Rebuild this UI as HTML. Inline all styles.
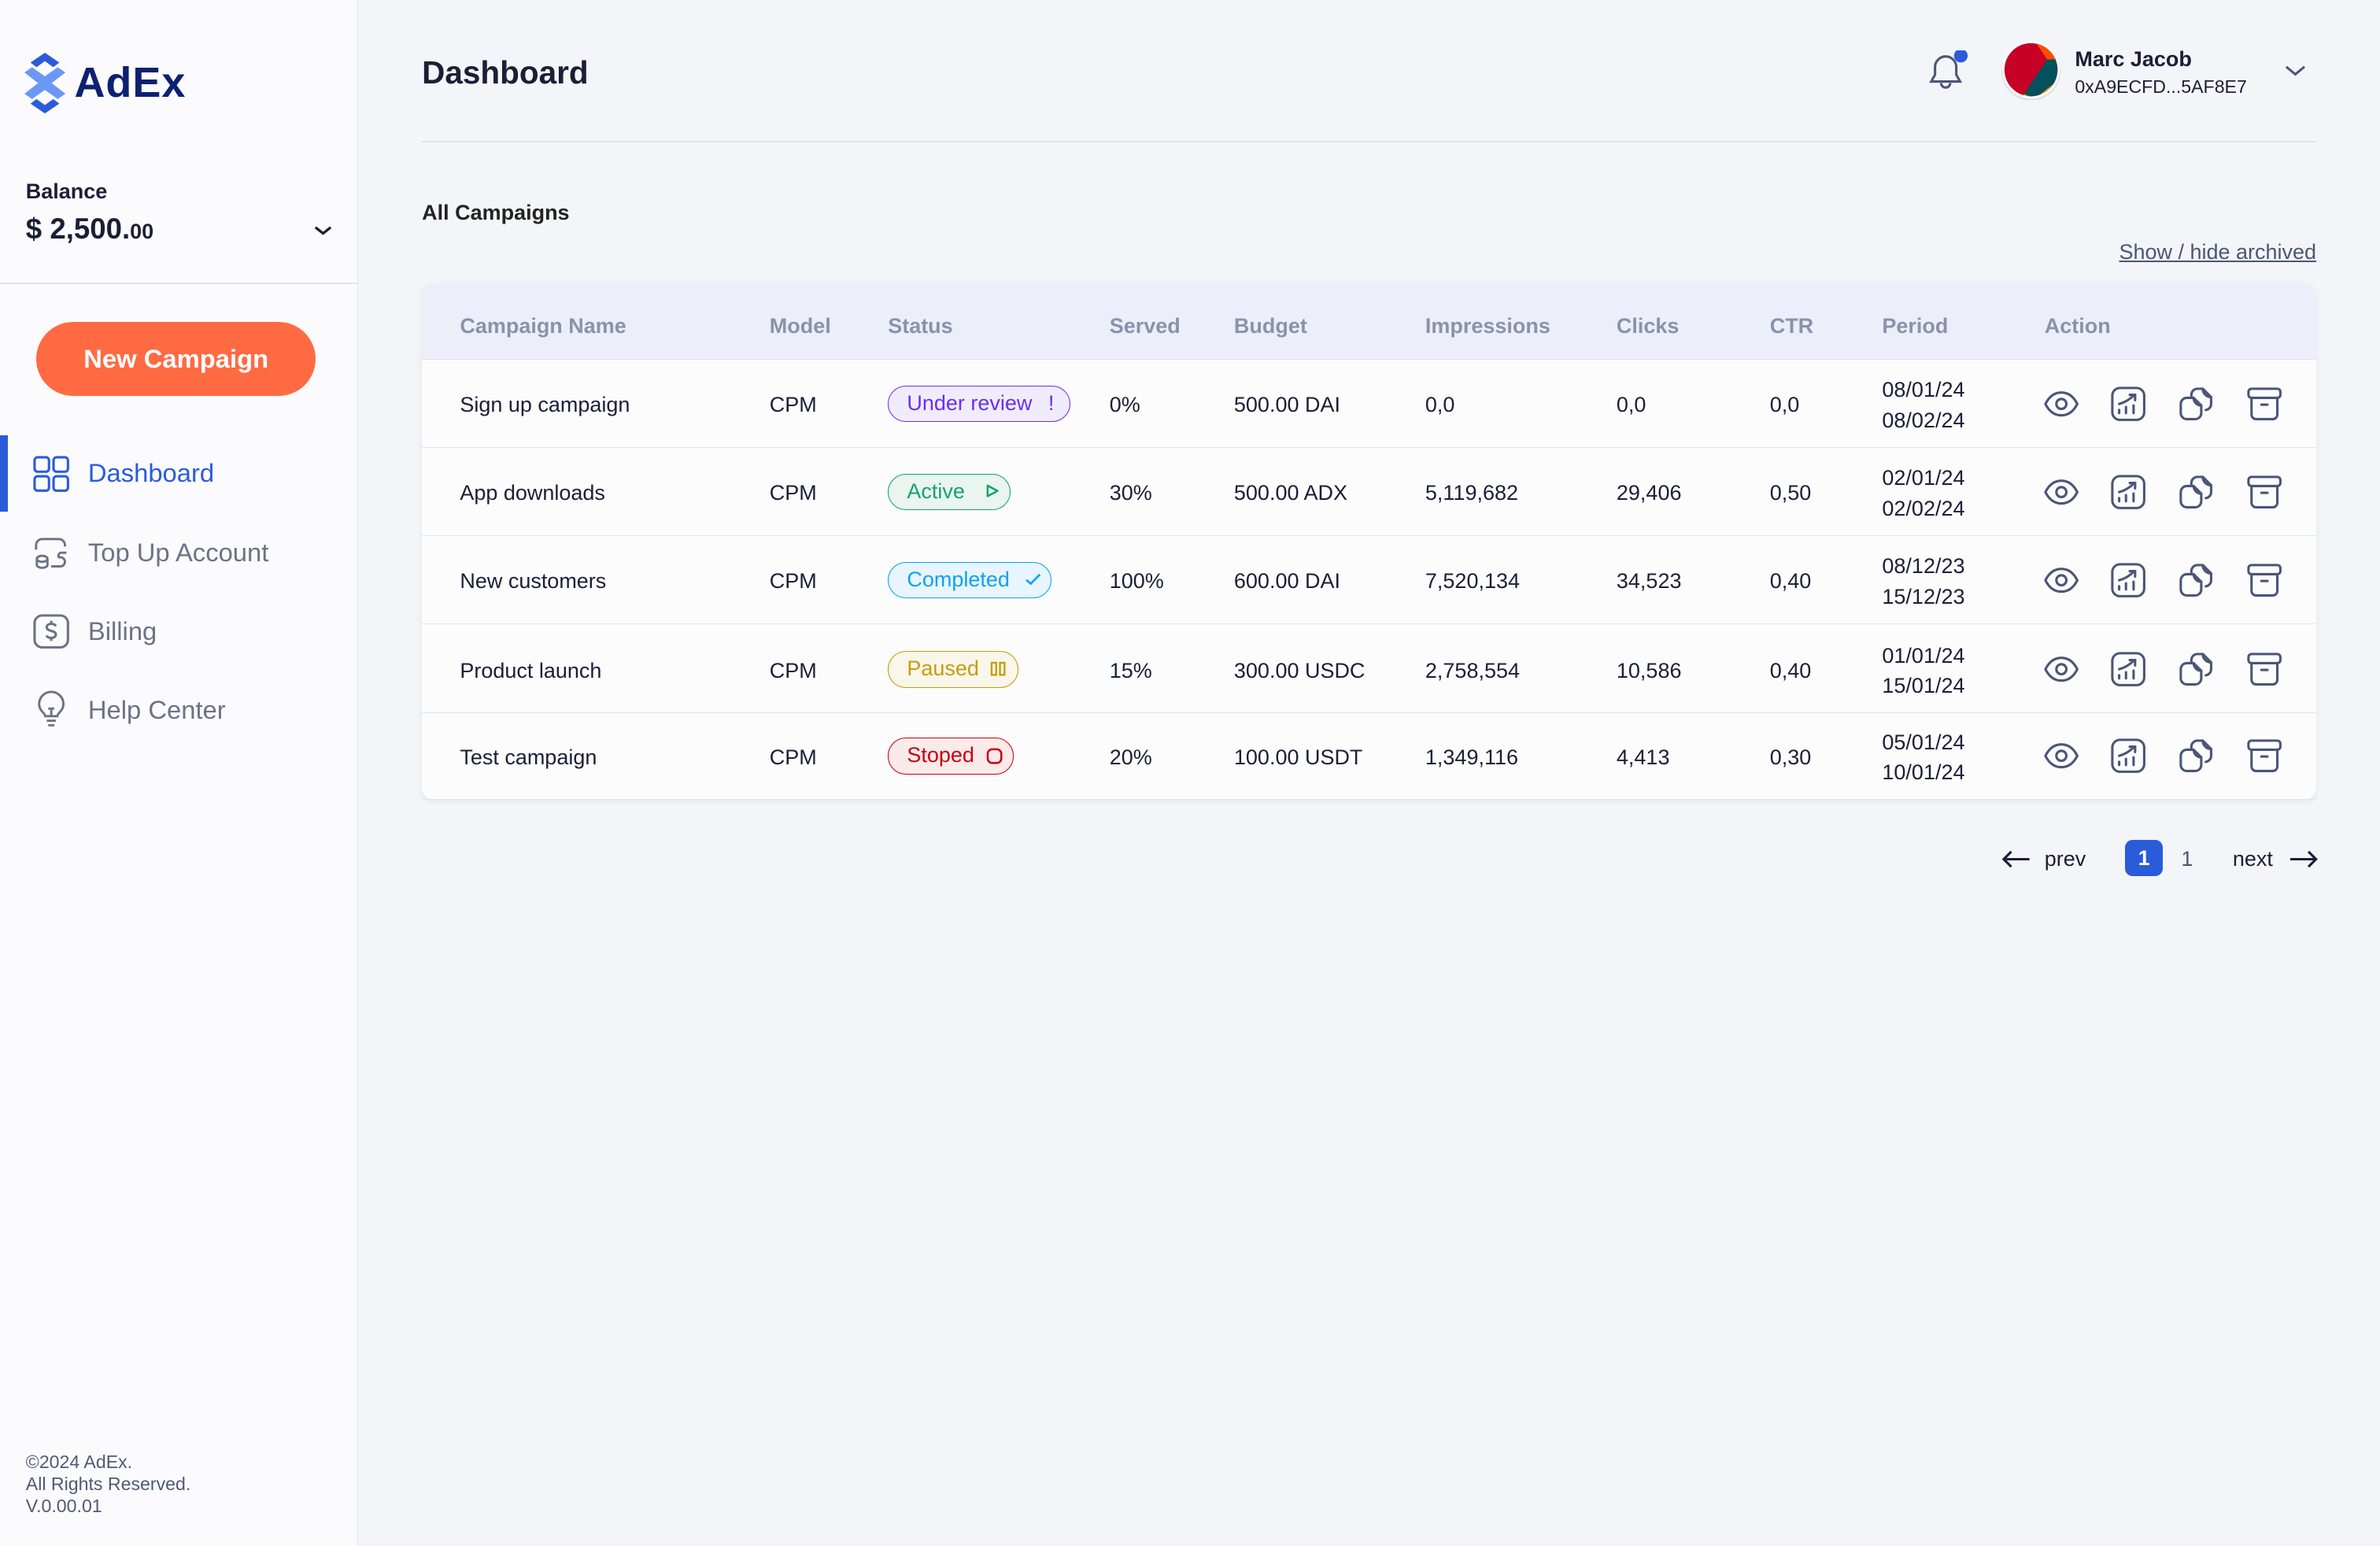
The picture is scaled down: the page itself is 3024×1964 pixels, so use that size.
<!DOCTYPE html>
<html><head><meta charset="utf-8"><style>
*{margin:0;padding:0;box-sizing:border-box}
html,body{width:3024px;height:1964px;overflow:hidden}
body{background:#f4f5f9;font-family:"Liberation Sans",Arial,sans-serif;color:#1a1f36}
#r{zoom:1.92857;width:1568px;height:1019px;position:relative}
.a{position:absolute;white-space:nowrap}
.sb{left:0;top:0;width:236px;height:1019px;background:#fbfbfd;border-right:1px solid #e2e4f0}
.nav{font-size:17px;color:#6b7385;line-height:20px}
.tbl{left:278px;top:187px;width:1248px;height:340px;background:#fcfcfd;border-radius:8px;box-shadow:0 1px 4px rgba(30,40,90,.08);overflow:hidden}
.th{position:absolute;top:0;left:0;width:1248px;height:50px;background:#eceef9;border-bottom:1px solid #dde0f0}
.h{font-size:14px;font-weight:bold;color:#8a92ab;top:20px;line-height:16px}
.row{position:absolute;left:0;width:1248px;height:58px;border-bottom:1px solid #e1e3f1}
.c{font-size:14px;line-height:16px;top:22px}
.p{font-size:14px;line-height:20px;top:10px}
.b{position:absolute;top:17px;height:24px;border:1px solid;border-radius:12px;font-size:14px;line-height:22px;padding-left:12px}
.ic{position:absolute;top:17px;width:24px;height:24px}
</style></head><body><div id="r">
<div class="a sb"></div>
<svg class="a" style="left:16px;top:35px" width="27" height="40" viewBox="0 0 27 40">
<path d="M13.5 0L23 6.5 19 9.5 13.5 5.5 8 9.5 4 6.5Z" fill="#2a5bdb"/>
<path d="M13.5 40L23 33.5 19 30.5 13.5 34.5 8 30.5 4 33.5Z" fill="#2a5bdb"/>
<path d="M0 13L5 9.5 13.5 15.5 22 9.5 27 13 18 20 27 27 22 30.5 13.5 24.5 5 30.5 0 27 9 20Z" fill="#6b97f7"/>
</svg>
<div class="a" style="left:49px;top:39px;font-size:28px;font-weight:bold;color:#0d2170;letter-spacing:.5px;line-height:32px">AdEx</div>
<div class="a" style="left:17px;top:118px;font-size:14px;font-weight:bold;line-height:16px">Balance</div>
<div class="a" style="left:17px;top:140px;font-size:19px;font-weight:bold;line-height:22px">$ 2,500.<span style="font-size:14px">00</span></div>
<svg class="a" style="left:206px;top:147px" width="14" height="10"><path d="M2 3l5 4 5-4" stroke="#1a1f36" stroke-width="1.7" fill="none"/></svg>
<div class="a" style="left:0;top:186px;width:236px;height:1px;background:#e2e4f0"></div>
<div class="a" style="left:24px;top:212px;width:184px;height:49px;border-radius:25px;background:#ff6a42;color:#fff;font-size:17px;font-weight:bold;text-align:center;line-height:49px">New Campaign</div>
<div class="a" style="left:0;top:287px;width:5px;height:50px;background:#2a5bdb"></div>
<svg class="a" style="left:22px;top:300px" width="24" height="24" viewBox="0 0 24 24" fill="none" stroke="#2a5bdb" stroke-width="1.6"><rect x="1" y="1" width="9.5" height="9.5" rx="2"/><rect x="13.5" y="1" width="9.5" height="9.5" rx="2"/><rect x="1" y="13.5" width="9.5" height="9.5" rx="2"/><rect x="13.5" y="13.5" width="9.5" height="9.5" rx="2"/></svg>
<div class="a nav" style="left:58px;top:302px;color:#2a5bdb">Dashboard</div>
<svg class="a" style="left:22px;top:352px" width="24" height="24" viewBox="0 0 24 24" fill="none" stroke="#6b7385" stroke-width="1.5"><path d="M2 10V7a4 4 0 014-4h11a4 4 0 014 4v1"/><ellipse cx="6" cy="16" rx="3.5" ry="2"/><path d="M2.5 16v4c0 1.1 1.6 2 3.5 2s3.5-.9 3.5-2v-4"/><path d="M12 21h6a3 3 0 000-6h-1a2 2 0 012-3h3"/></svg>
<div class="a nav" style="left:58px;top:354px">Top Up Account</div>
<svg class="a" style="left:22px;top:404px" width="24" height="24" viewBox="0 0 24 24" fill="none" stroke="#6b7385" stroke-width="1.6"><rect x="1" y="1.5" width="22" height="21" rx="5"/><path d="M15 8.5c-.5-1-1.6-1.5-3-1.5-1.8 0-3 .9-3 2.3 0 3 6 1.7 6 4.7 0 1.3-1.3 2.3-3 2.3-1.5 0-2.7-.6-3.2-1.6M12 5v2M12 16.3v2"/></svg>
<div class="a nav" style="left:58px;top:406px">Billing</div>
<svg class="a" style="left:22px;top:455px" width="24" height="26" viewBox="0 0 24 26" fill="none" stroke="#6b7385" stroke-width="1.5"><path d="M8 17c0-2-4-3.5-4-8a8 8 0 0116 0c0 4.5-4 6-4 8z"/><path d="M9 20h6M10 23h4M12 17v-5M10 12h4"/></svg>
<div class="a nav" style="left:58px;top:458px">Help Center</div>
<div class="a" style="left:17px;top:956px;font-size:12px;line-height:14.5px;color:#505a75">©2024 AdEx.<br>All Rights Reserved.<br>V.0.00.01</div>

<div class="a" style="left:278px;top:36px;font-size:21px;font-weight:bold;line-height:24px">Dashboard</div>
<svg class="a" style="left:1270px;top:33px" width="28" height="30" viewBox="0 0 28 30" fill="none" stroke="#4b5675" stroke-width="1.6"><path d="M12 4a7 7 0 017 7v5l2.5 4.5h-19L5 16v-5a7 7 0 017-7z"/><path d="M9 21.5a3 3 0 006 0"/><circle cx="22" cy="3.5" r="4.5" fill="#2a5bdb" stroke="none"/></svg>
<svg class="a" style="left:1318px;top:26px" width="40" height="40" viewBox="0 0 40 40"><defs><clipPath id="cp"><circle cx="20" cy="20" r="17.5"/></clipPath></defs><circle cx="20" cy="21" r="19.5" fill="#000" opacity=".08"/><circle cx="20" cy="20" r="19" fill="#fff"/><g clip-path="url(#cp)"><rect width="40" height="40" fill="#c70025"/><path d="M21.8 0L40 0 40 13 30.6 13.3z" fill="#ff4d00"/><path d="M30.6 13.3L40 13 40 25.4 22.5 39 15.3 36z" fill="#064f5c"/><path d="M40 25.4L40 40 22.5 39z" fill="#f2a200"/><path d="M15.3 36L22.5 39 20 40 13 40z" fill="#f2a200"/></g></svg>
<div class="a" style="left:1367px;top:31px;font-size:14px;font-weight:bold;line-height:16px">Marc Jacob</div>
<div class="a" style="left:1367px;top:50px;font-size:12px;line-height:15px">0xA9ECFD...5AF8E7</div>
<svg class="a" style="left:1504px;top:41px" width="16" height="12"><path d="M2 3l6 5 6-5" stroke="#4b5675" stroke-width="1.6" fill="none"/></svg>
<div class="a" style="left:278px;top:93px;width:1248px;height:1px;background:#dfe1ea"></div>
<div class="a" style="left:278px;top:132px;font-size:14px;font-weight:bold;line-height:16px;color:#222">All Campaigns</div>
<div class="a" style="right:42px;top:158px;font-size:14px;line-height:16px;color:#4b5675;text-decoration:underline">Show / hide archived</div>

<div class="a tbl">
<div class="th">
<div class="a h" style="left:25px">Campaign Name</div><div class="a h" style="left:229px">Model</div><div class="a h" style="left:307px">Status</div><div class="a h" style="left:453px">Served</div><div class="a h" style="left:535px">Budget</div><div class="a h" style="left:661px">Impressions</div><div class="a h" style="left:787px">Clicks</div><div class="a h" style="left:888px">CTR</div><div class="a h" style="left:962px">Period</div><div class="a h" style="left:1069px">Action</div>
</div>
</div>
<div class="a" style="left:278px;top:237px;width:1248px" id="rows"></div>
<div class="a" style="left:1318px;top:556px;font-size:14px;line-height:20px;color:#1a1f36">
<svg style="position:absolute;left:0;top:3px" width="20" height="14"><path d="M19 7H2M7 2L2 7l5 5" stroke="#1a1f36" stroke-width="1.6" fill="none"/></svg>
<span style="position:absolute;left:29px;top:0">prev</span>
<span style="position:absolute;left:82px;top:-3px;width:25px;height:24px;background:#2a5bdb;border-radius:5px;color:#fff;font-weight:bold;text-align:center;line-height:24px">1</span>
<span style="position:absolute;left:119px;top:0;color:#4b5675">1</span>
<span style="position:absolute;left:153px;top:0">next</span>
<svg style="position:absolute;left:190px;top:3px" width="20" height="14"><path d="M1 7h17M13 2l5 5-5 5" stroke="#1a1f36" stroke-width="1.6" fill="none"/></svg>
</div>
<script>
var R=[["Sign up campaign","Under review","0%","500.00 DAI","0,0","0,0","0,0","08/01/24","08/02/24"],
["App downloads","Active","30%","500.00 ADX","5,119,682","29,406","0,50","02/01/24","02/02/24"],
["New customers","Completed","100%","600.00 DAI","7,520,134","34,523","0,40","08/12/23","15/12/23"],
["Product launch","Paused","15%","300.00 USDC","2,758,554","10,586","0,40","01/01/24","15/01/24"],
["Test campaign","Stoped","20%","100.00 USDT","1,349,116","4,413","0,30","05/01/24","10/01/24"]];
var B={"Under review":["#6b2ef5","#f1ecfd",120,'<span style="position:absolute;right:10px;top:0">!</span>'],
"Active":["#13a36e","#e9f5ee",81,'<svg style="position:absolute;right:7px;top:6px" width="10" height="10"><path d="M2 1.5v7l6.5-3.5z" stroke="#13a36e" stroke-width="1.3" fill="none" stroke-linejoin="round"/></svg>'],
"Completed":["#0aa2f5","#e8f5fe",108,'<svg style="position:absolute;right:6px;top:6px" width="12" height="10"><path d="M1.5 5.5l3 2.5 6-6" stroke="#0aa2f5" stroke-width="1.4" fill="none"/></svg>'],
"Paused":["#c89b0a","#f9f6ea",86,'<svg style="position:absolute;right:7px;top:6px" width="11" height="10"><rect x="1" y="1" width="3" height="8" stroke="#c89b0a" stroke-width="1.2" fill="none"/><rect x="6.5" y="1" width="3" height="8" stroke="#c89b0a" stroke-width="1.2" fill="none"/></svg>'],
"Stoped":["#c8000f","#fbeaea",83,'<svg style="position:absolute;right:7px;top:6px" width="11" height="11"><rect x="1" y="1" width="9" height="9" rx="3" stroke="#c8000f" stroke-width="1.3" fill="none"/></svg>']};
var I='<svg class="ic" style="left:1068px" viewBox="0 0 24 24" fill="none" stroke="#4b5675" stroke-width="1.6"><path d="M1.5 12C4 7 7.5 4.5 12 4.5S20 7 22.5 12C20 17 16.5 19.5 12 19.5S4 17 1.5 12z"/><circle cx="12" cy="12" r="3.3"/></svg>'+
'<svg class="ic" style="left:1112px" viewBox="0 0 24 24" fill="none" stroke="#4b5675" stroke-width="1.6" stroke-linecap="round"><rect x="1.5" y="1.5" width="21" height="21" rx="5"/><path d="M6 18v-2M10.5 18v-4M15.5 18v-5M6 12c4-1 7-3 10-6M13 6h3.5v3.5"/></svg>'+
'<svg class="ic" style="left:1157px" viewBox="0 0 24 24" fill="none" stroke="#4b5675" stroke-width="1.6" stroke-linejoin="round" stroke-linecap="round"><path d="M9 8V6a4 4 0 014-4h3.5l5.5 5.5V12a4 4 0 01-3.5 4"/><path d="M16.5 2a5.5 5.5 0 005.5 5.5"/><path d="M6 8h4.5l5 5v5a4 4 0 01-4 4H6a4 4 0 01-4-4v-6a4 4 0 014-4z"/><path d="M10.5 8a5 5 0 005 5"/></svg>'+
'<svg class="ic" style="left:1202px" viewBox="0 0 24 24" fill="none" stroke="#4b5675" stroke-width="1.6" stroke-linecap="round"><rect x="1.5" y="2" width="21" height="6" rx="2"/><path d="M3.5 8v11a3 3 0 003 3h11a3 3 0 003-3V8M10 12.5h4"/></svg>';
var h='';R.forEach(function(r,i){var b=B[r[1]];
h+='<div class="row" style="top:'+(i*58+(i==3?1:0))+'px"><div class="a c" style="left:25px">'+r[0]+'</div><div class="a c" style="left:229px">CPM</div>'+
'<div class="b" style="left:307px;width:'+b[2]+'px;color:'+b[0]+';border-color:'+b[0]+';background:'+b[1]+'">'+r[1]+b[3]+'</div>'+
'<div class="a c" style="left:453px">'+r[2]+'</div><div class="a c" style="left:535px">'+r[3]+'</div><div class="a c" style="left:661px">'+r[4]+'</div><div class="a c" style="left:787px">'+r[5]+'</div><div class="a c" style="left:888px">'+r[6]+'</div><div class="a p" style="left:962px">'+r[7]+'<br>'+r[8]+'</div>'+I+'</div>';});
document.getElementById('rows').innerHTML=h;
</script>
</div></body></html>
